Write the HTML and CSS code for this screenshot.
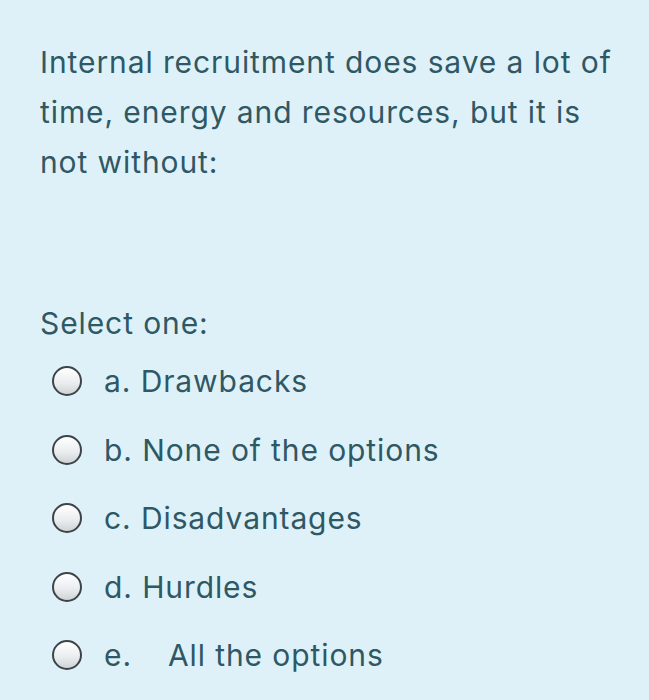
FILE: index.html
```html
<!DOCTYPE html>
<html>
<head>
<meta charset="utf-8">
<link rel="stylesheet" href="styles.css">
</head>
<body>
<div class="page">
  <p class="question">Internal recruitment does save a lot of time, energy and resources, but it is not without:</p>
  <div class="prompt">Select one:</div>
  <div class="options">
    <div class="option"><span class="radio"></span><span class="label">a. Drawbacks</span></div>
    <div class="option"><span class="radio"></span><span class="label">b. None of the options</span></div>
    <div class="option"><span class="radio"></span><span class="label">c. Disadvantages</span></div>
    <div class="option"><span class="radio"></span><span class="label">d. Hurdles</span></div>
    <div class="option"><span class="radio"></span><span class="label"><span class="letter">e.</span>All the options</span></div>
  </div>
</div>
</body>
</html>
```
FILE: styles.css
```css
html, body {
  margin: 0;
  padding: 0;
  background: #dff1f8;
}
.page {
  width: 649px;
  height: 700px;
  box-sizing: border-box;
  padding: 37px 20px 0 40px;
  font-family: Inter, "Liberation Sans", sans-serif;
  color: #2f5865;
  font-size: 30px;
  letter-spacing: 0.9px;
}
.question {
  margin: 0;
  line-height: 50px;
  width: 589px;
}
.prompt {
  margin-top: 111px;
  line-height: 50px;
}
.options {
  display: flex;
  flex-direction: column;
  margin-top: -1px;
}
.option {
  display: flex;
  align-items: center;
  height: 68.5px;
}
.radio {
  width: 26px;
  height: 26px;
  border: 2px solid #3d4347;
  border-radius: 50%;
  background: linear-gradient(180deg, #ffffff 0%, #e9ecee 60%, #cfd3d6 100%);
  margin-left: 12px;
  margin-right: 22px;
  flex: none;
}
.letter {
  display: inline-block;
  width: 64px;
}
```
